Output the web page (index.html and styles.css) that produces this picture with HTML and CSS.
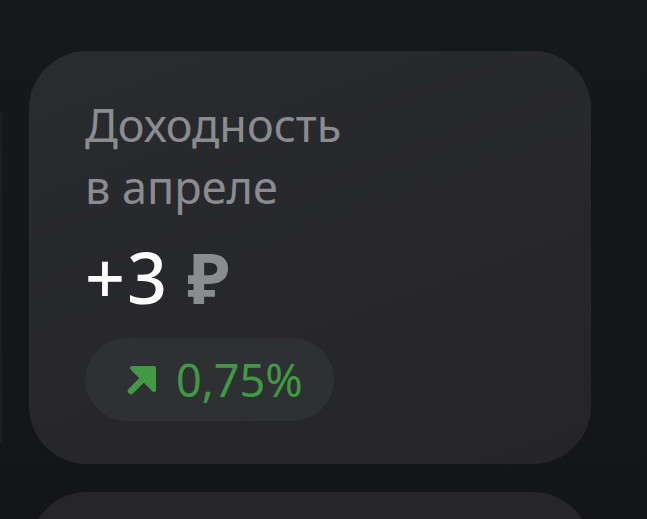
FILE: index.html
```html
<!DOCTYPE html>
<html lang="ru">
<head>
<meta charset="utf-8">
<link rel="stylesheet" href="styles.css">
</head>
<body>
<div class="screen">
  <div class="edge"></div>
  <div class="list">
    <section class="card">
      <h2 class="title">Доходность<br>в апреле</h2>
      <div class="amount"><span class="value">+3</span> <span class="cur">₽</span></div>
      <div class="pill">
        <svg class="arrow" viewBox="0 0 30 30" width="30" height="30" aria-hidden="true">
          <path d="M5 3 H27 V25 Z" fill="#3f9a42" stroke="#3f9a42" stroke-width="4" stroke-linejoin="round"/>
          <path d="M4 26 L17 13" stroke="#3f9a42" stroke-width="6.5" stroke-linecap="round"/>
        </svg>
        <span class="pct">0,75%</span>
      </div>
    </section>
    <section class="card card-next"></section>
  </div>
</div>
</body>
</html>
```
FILE: styles.css
```css
html, body {
  margin: 0;
  padding: 0;
}
body {
  width: 647px;
  height: 519px;
  overflow: hidden;
  background: linear-gradient(180deg, #17181c 0%, #141517 100%);
  font-family: "Noto Sans", "Open Sans", sans-serif;
}
.screen {
  display: flex;
  height: 519px;
  overflow: hidden;
}
.edge {
  width: 2px;
  margin-top: 112px;
  height: 330px;
  background: #1d1e22;
}
.list {
  display: flex;
  flex-direction: column;
  gap: 28px;
  padding: 51px 0 0 27px;
}
.card {
  flex-shrink: 0;
  width: 562px;
  height: 413px;
  box-sizing: border-box;
  border-radius: 58px;
  background: linear-gradient(160deg, #2a2b2f 0%, #252528 100%);
  padding: 43px 0 0 56px;
  display: flex;
  flex-direction: column;
}
.card-next {
  background: #262628;
}
.title {
  margin: 0;
  font-weight: 400;
  font-size: 45px;
  line-height: 62px;
  color: #8b8c90;
}
.amount {
  margin-top: 19px;
  font-size: 70px;
  line-height: 80px;
  font-weight: 500;
  color: #ffffff;
}
.value {
  letter-spacing: 2px;
}
.cur {
  color: #8b8c90;
  font-weight: 700;
}
.pill {
  margin-top: 21px;
  align-self: flex-start;
  display: flex;
  align-items: center;
  gap: 19px;
  height: 83px;
  box-sizing: border-box;
  padding: 0 31px 0 42px;
  border-radius: 42px;
  background: #2f3033;
}
.arrow {
  display: block;
}
.pct {
  font-size: 45px;
  color: #3f9a42;
  line-height: 1;
}
```
